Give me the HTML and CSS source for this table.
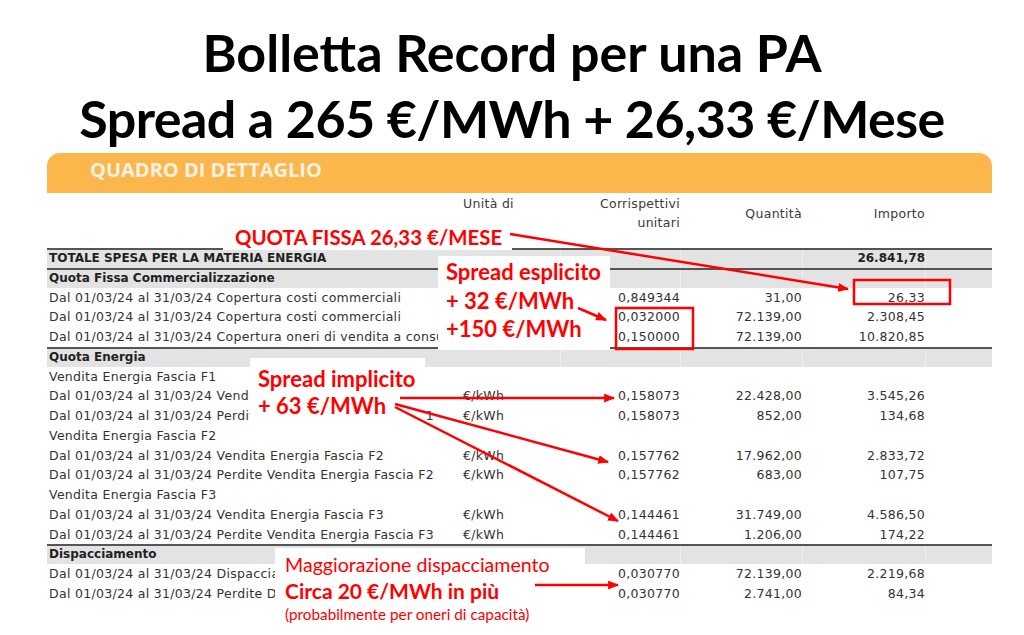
FILE: index.html
```html
<!DOCTYPE html>
<html lang="it">
<head>
<meta charset="utf-8">
<title>Bolletta Record per una PA</title>
<link rel="stylesheet" href="styles.css">
</head>
<body>
<div class="page">
  <div class="title">
    <div>Bolletta Record per una PA</div>
    <div class="tight">Spread a 265 €/MWh + 26,33 €/Mese</div>
  </div>
  <div class="band">QUADRO DI DETTAGLIO</div>
  <div class="table">
    <div class="row head">
      <div class="c lab"></div>
      <div class="c u">Unità di</div>
      <div class="c n">Corrispettivi<br>unitari</div>
      <div class="c n mid">Quantità</div>
      <div class="c n mid">Importo</div>
      <div class="c pad"></div>
    </div>
    <div class="row grey line b">
      <div class="c lab">TOTALE SPESA PER LA MATERIA ENERGIA</div>
      <div class="c u"></div><div class="c n"></div><div class="c n"></div>
      <div class="c n">26.841,78</div><div class="c pad"></div>
    </div>
    <div class="row grey line b">
      <div class="c lab">Quota Fissa Commercializzazione</div>
      <div class="c u"></div><div class="c n"></div><div class="c n"></div><div class="c n"></div><div class="c pad"></div>
    </div>
    <div class="row">
      <div class="c lab">Dal 01/03/24 al 31/03/24 Copertura costi commerciali</div>
      <div class="c u"></div><div class="c n">0,849344</div><div class="c n">31,00</div><div class="c n">26,33</div><div class="c pad"></div>
    </div>
    <div class="row">
      <div class="c lab">Dal 01/03/24 al 31/03/24 Copertura costi commerciali</div>
      <div class="c u"></div><div class="c n">0,032000</div><div class="c n">72.139,00</div><div class="c n">2.308,45</div><div class="c pad"></div>
    </div>
    <div class="row">
      <div class="c lab">Dal 01/03/24 al 31/03/24 Copertura oneri di vendita a consu</div>
      <div class="c u"></div><div class="c n">0,150000</div><div class="c n">72.139,00</div><div class="c n">10.820,85</div><div class="c pad"></div>
    </div>
    <div class="row grey line b">
      <div class="c lab">Quota Energia</div>
      <div class="c u"></div><div class="c n"></div><div class="c n"></div><div class="c n"></div><div class="c pad"></div>
    </div>
    <div class="row">
      <div class="c lab">Vendita Energia Fascia F1</div>
      <div class="c u"></div><div class="c n"></div><div class="c n"></div><div class="c n"></div><div class="c pad"></div>
    </div>
    <div class="row">
      <div class="c lab">Dal 01/03/24 al 31/03/24 Vendita Energia Fascia F1</div>
      <div class="c u">€/kWh</div><div class="c n">0,158073</div><div class="c n">22.428,00</div><div class="c n">3.545,26</div><div class="c pad"></div>
    </div>
    <div class="row">
      <div class="c lab">Dal 01/03/24 al 31/03/24 Perdite Vendita Energia Fascia F1</div>
      <div class="c u">€/kWh</div><div class="c n">0,158073</div><div class="c n">852,00</div><div class="c n">134,68</div><div class="c pad"></div>
    </div>
    <div class="row">
      <div class="c lab">Vendita Energia Fascia F2</div>
      <div class="c u"></div><div class="c n"></div><div class="c n"></div><div class="c n"></div><div class="c pad"></div>
    </div>
    <div class="row">
      <div class="c lab">Dal 01/03/24 al 31/03/24 Vendita Energia Fascia F2</div>
      <div class="c u">€/kWh</div><div class="c n">0,157762</div><div class="c n">17.962,00</div><div class="c n">2.833,72</div><div class="c pad"></div>
    </div>
    <div class="row">
      <div class="c lab">Dal 01/03/24 al 31/03/24 Perdite Vendita Energia Fascia F2</div>
      <div class="c u">€/kWh</div><div class="c n">0,157762</div><div class="c n">683,00</div><div class="c n">107,75</div><div class="c pad"></div>
    </div>
    <div class="row">
      <div class="c lab">Vendita Energia Fascia F3</div>
      <div class="c u"></div><div class="c n"></div><div class="c n"></div><div class="c n"></div><div class="c pad"></div>
    </div>
    <div class="row">
      <div class="c lab">Dal 01/03/24 al 31/03/24 Vendita Energia Fascia F3</div>
      <div class="c u">€/kWh</div><div class="c n">0,144461</div><div class="c n">31.749,00</div><div class="c n">4.586,50</div><div class="c pad"></div>
    </div>
    <div class="row">
      <div class="c lab">Dal 01/03/24 al 31/03/24 Perdite Vendita Energia Fascia F3</div>
      <div class="c u">€/kWh</div><div class="c n">0,144461</div><div class="c n">1.206,00</div><div class="c n">174,22</div><div class="c pad"></div>
    </div>
    <div class="row grey line b">
      <div class="c lab">Dispacciamento</div>
      <div class="c u"></div><div class="c n"></div><div class="c n"></div><div class="c n"></div><div class="c pad"></div>
    </div>
    <div class="row">
      <div class="c lab">Dal 01/03/24 al 31/03/24 Dispacciamento</div>
      <div class="c u"></div><div class="c n">0,030770</div><div class="c n">72.139,00</div><div class="c n">2.219,68</div><div class="c pad"></div>
    </div>
    <div class="row">
      <div class="c lab">Dal 01/03/24 al 31/03/24 Perdite Dispacciamento</div>
      <div class="c u"></div><div class="c n">0,030770</div><div class="c n">2.741,00</div><div class="c n">84,34</div><div class="c pad"></div>
    </div>
  </div>

  <div class="note n-quota">QUOTA FISSA 26,33 €/MESE</div>
  <div class="note n-expl">Spread esplicito<br>+ 32 €/MWh<br>+150 €/MWh</div>
  <div class="note n-impl">Spread implicito<br>+ 63 €/MWh</div>
  <div class="note n-disp">
    <div class="d1">Maggiorazione dispacciamento</div>
    <div class="d2">Circa 20 €/MWh in più</div>
    <div class="d3">(probabilmente per oneri di capacità)</div>
  </div>

  <svg class="overlay" width="1024" height="635" viewBox="0 0 1024 635">
    <defs>
      <marker id="ah" viewBox="0 0 10 8" refX="9" refY="4" markerWidth="11" markerHeight="9" orient="auto" markerUnits="userSpaceOnUse">
        <path d="M0 0L10 4L0 8z" fill="#ff0000"/>
      </marker>
    </defs>
    <g stroke="#ff0000" stroke-width="2.5" fill="none">
      <line x1="510" y1="234" x2="848" y2="289" marker-end="url(#ah)"/>
      <line x1="578" y1="308" x2="606" y2="320" marker-end="url(#ah)"/>
      <line x1="400" y1="398" x2="614" y2="398" marker-end="url(#ah)"/>
      <line x1="395" y1="404" x2="608" y2="462" marker-end="url(#ah)"/>
      <line x1="395" y1="407" x2="618" y2="521" marker-end="url(#ah)"/>
      <line x1="535" y1="585" x2="618" y2="585" marker-end="url(#ah)"/>
      <rect x="854" y="280" width="96" height="24"/>
      <rect x="616" y="308" width="77" height="41"/>
    </g>
  </svg>
</div>
</body>
</html>
```

FILE: styles.css
```css
* { box-sizing: border-box; margin: 0; padding: 0; }
html, body { background: #fff; }
body { width: 1024px; height: 635px; overflow: hidden; }

.page { position: relative; width: 1024px; height: 635px; overflow: hidden; }

.title {
  height: 153px;
  padding-top: 19px;
  font-family: Lato, "Open Sans", sans-serif;
  font-weight: 700;
  font-size: 52px;
  line-height: 66px;
  text-align: center;
  color: #000;
}
.title .tight { letter-spacing: -0.55px; }

.band {
  margin-left: 47px;
  width: 945px;
  height: 40px;
  padding-left: 43px;
  background: #fbb74c;
  border-radius: 13px 13px 0 0;
  font-family: "Open Sans", sans-serif;
  font-weight: 700;
  font-size: 20px;
  line-height: 34px;
  color: #f8f1e4;
}

.table {
  margin-left: 47px;
  width: 945px;
  font-family: "DejaVu Sans", sans-serif;
  font-size: 12.5px;
  letter-spacing: 0.3px;
  color: #333;
}

.row {
  display: grid;
  grid-template-columns: 416px 97px 120px 122px 123px 67px;
  height: 19.75px;
  line-height: 19px;
}

.row.head {
  height: 55px;
  align-items: start;
  padding-top: 1px;
  color: #3a3a3a;
}
.row.head .mid { padding-top: 10px; }

.c { white-space: nowrap; }
.lab { padding-left: 2px; }
.n { text-align: right; }

.grey { background: #e3e3e3; }
.line { border-top: 2px solid #555; line-height: 17px; }
.b { font-weight: 700; color: #222; font-size: 12px; letter-spacing: 0; }
.grey > .n, .grey > .pad { border-left: 1px solid #efefef; }

.note {
  position: absolute;
  background: #fff;
  color: #ff0000;
  font-family: Lato, "Open Sans", sans-serif;
  font-weight: 700;
  white-space: nowrap;
}
.n-quota {
  left: 223px; top: 216px; width: 289px; height: 34px;
  padding: 6px 0 0 12px;
  font-size: 20.4px; line-height: 30px;
}
.n-expl {
  left: 438px; top: 256px; width: 172px; height: 94px;
  padding: 2px 0 0 8px;
  font-size: 22px; line-height: 28.5px;
}
.n-impl {
  left: 250px; top: 358px; width: 175px; height: 66px;
  padding: 7px 0 0 8px;
  font-size: 22px; line-height: 27px;
}
.n-disp {
  left: 275px; top: 548px; width: 310px; height: 87px;
  padding: 4px 0 0 10px;
  font-weight: 400;
}
.n-disp .d1 { font-size: 19.6px; line-height: 26px; }
.n-disp .d2 { font-size: 21px; line-height: 26px; font-weight: 700; }
.n-disp .d3 { font-size: 15.3px; line-height: 20px; }

.overlay { position: absolute; left: 0; top: 0; pointer-events: none; }
```
